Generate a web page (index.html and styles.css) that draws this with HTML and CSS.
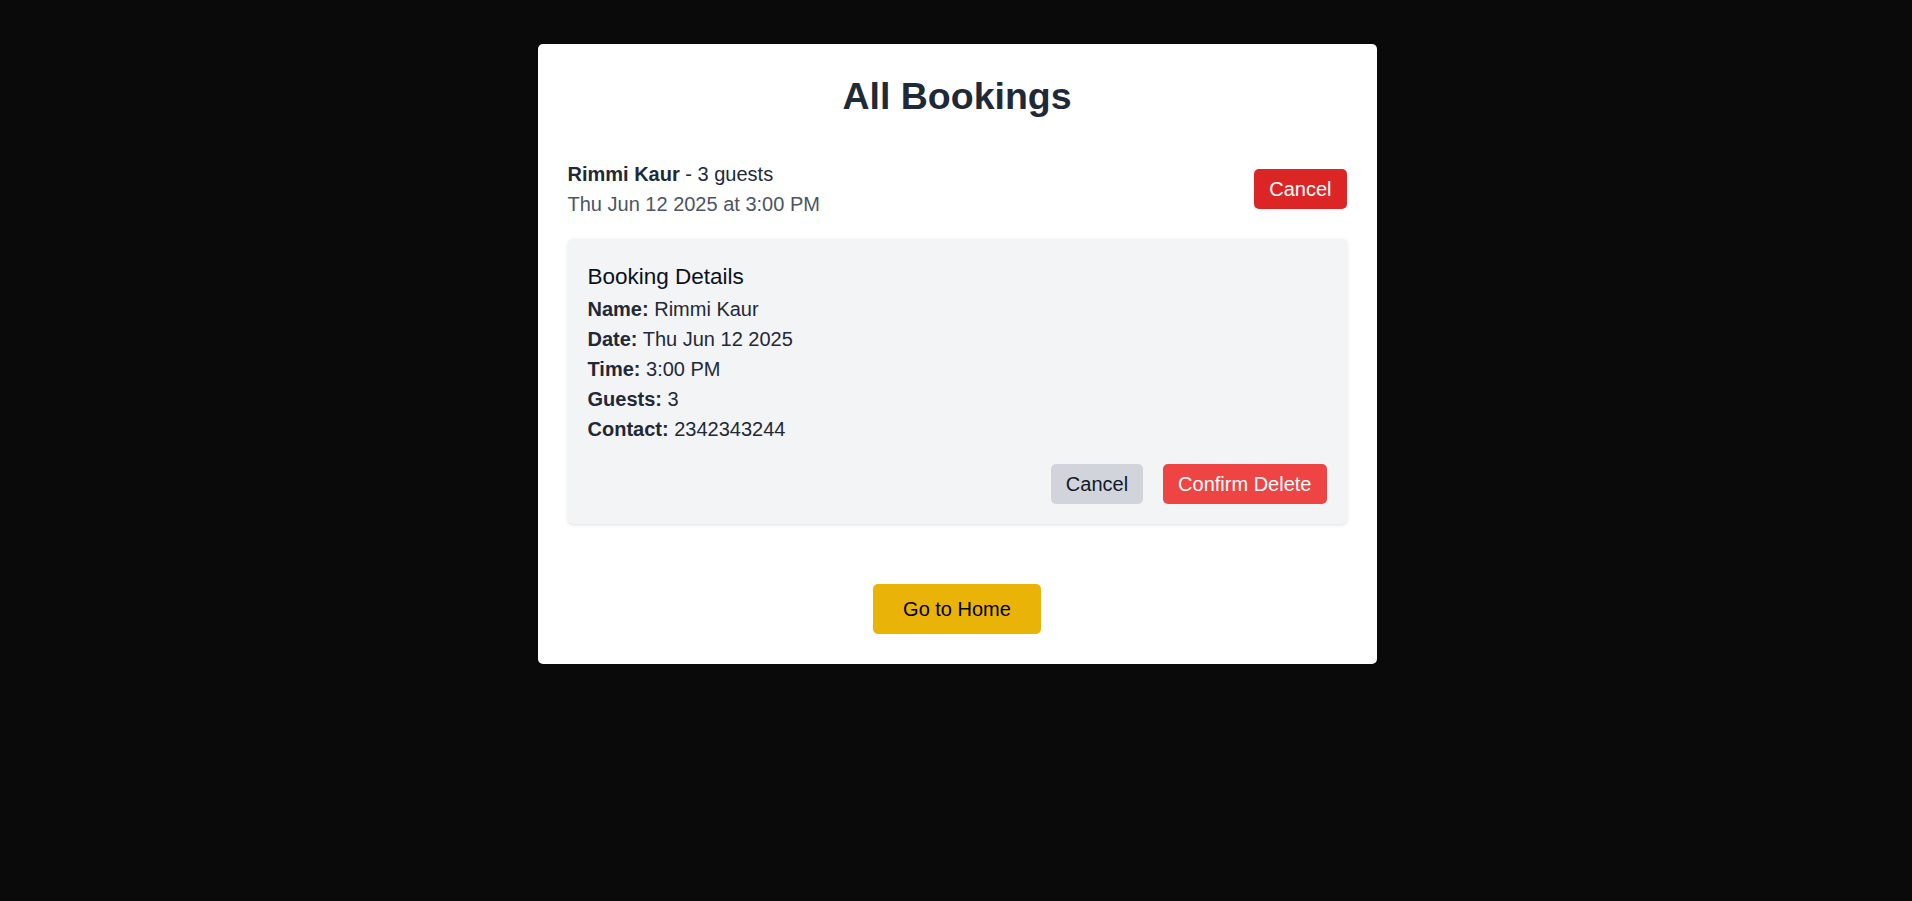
FILE: index.html
```html
<!DOCTYPE html>
<html lang="en">
<head>
<meta charset="utf-8">
<title>All Bookings</title>
<link rel="stylesheet" href="styles.css">
</head>
<body>
<main class="page">
  <section class="card">
    <h1 class="title">All Bookings</h1>
    <ul class="list">
      <li class="item">
        <div class="row">
          <div class="row-info">
            <div class="row-main"><span class="name">Rimmi Kaur</span> - 3 guests</div>
            <div class="row-sub">Thu Jun 12 2025 at 3:00 PM</div>
          </div>
          <button class="btn btn-cancel">Cancel</button>
        </div>
        <div class="details">
          <h3 class="details-title">Booking Details</h3>
          <p class="detail"><strong>Name:</strong> Rimmi Kaur</p>
          <p class="detail"><strong>Date:</strong> Thu Jun 12 2025</p>
          <p class="detail"><strong>Time:</strong> 3:00 PM</p>
          <p class="detail"><strong>Guests:</strong> 3</p>
          <p class="detail"><strong>Contact:</strong> 2342343244</p>
          <div class="actions">
            <button class="btn btn-gray">Cancel</button>
            <button class="btn btn-delete">Confirm Delete</button>
          </div>
        </div>
      </li>
    </ul>
    <div class="home-wrap">
      <button class="btn btn-home">Go to Home</button>
    </div>
  </section>
</main>
</body>
</html>
```

FILE: styles.css
```css
* { box-sizing: border-box; }
html, body {
  margin: 0;
  padding: 0;
  background: #0a0a0a;
  font-family: "Liberation Sans", Arial, sans-serif;
}
.page {
  min-height: 901px;
  padding-top: 44px;
  padding-left: 2px;
  display: flex;
  flex-direction: column;
  align-items: center;
}
.card {
  width: 839px;
  background: #ffffff;
  border-radius: 5px;
  padding: 30px;
}
.title {
  margin: 0 0 40px 0;
  font-size: 37.5px;
  line-height: 45px;
  font-weight: 700;
  text-align: center;
  color: #1f2937;
}
.list {
  list-style: none;
  margin: 0;
  padding: 0;
}
.row {
  display: flex;
  justify-content: space-between;
  align-items: center;
}
.row-main {
  font-size: 20px;
  line-height: 30px;
  color: #1f2937;
}
.name { font-weight: 700; }
.row-sub {
  font-size: 20px;
  line-height: 30px;
  color: #4b5563;
}
.btn {
  border: none;
  font-family: "Liberation Sans", Arial, sans-serif;
  font-size: 20px;
  line-height: 30px;
  border-radius: 5px;
  padding: 5px 15px;
  cursor: pointer;
}
.btn-cancel {
  background: #dc2626;
  color: #ffffff;
}
.details {
  margin-top: 20px;
  background: #f3f4f6;
  border-radius: 5px;
  padding: 20px;
  box-shadow: 0 1px 4px rgba(0,0,0,0.1), 0 1px 2px -1px rgba(0,0,0,0.1);
}
.details-title {
  margin: 0;
  font-size: 22.5px;
  line-height: 35px;
  font-weight: 400;
  color: #0b1120;
}
.detail {
  margin: 0;
  font-size: 20px;
  line-height: 30px;
  color: #1f2937;
}
.detail strong { font-weight: 700; }
.actions {
  margin-top: 20px;
  display: flex;
  justify-content: flex-end;
  gap: 20px;
}
.btn-gray {
  background: #d1d5db;
  color: #111827;
}
.btn-delete {
  background: #ef4444;
  color: #ffffff;
}
.home-wrap {
  margin-top: 60px;
  display: flex;
  justify-content: center;
}
.btn-home {
  background: #eab308;
  color: #000000;
  padding: 10px 30px;
}
```
